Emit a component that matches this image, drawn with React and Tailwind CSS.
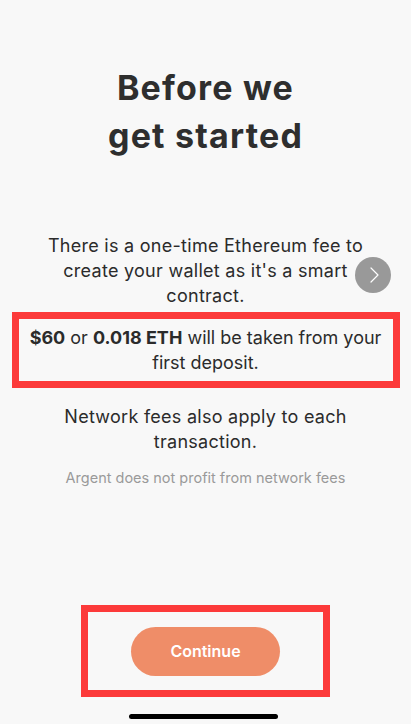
import React from 'react'

export default function App() {
  return (
    <div className="relative w-[411px] h-[724px] bg-[#f8f8f8] flex flex-col items-center text-[#2b2b2b] overflow-hidden" style={{ fontFamily: 'Inter, Roboto, sans-serif' }}>
      <h1 className="mt-[64px] text-[34px] leading-[48px] font-bold text-center text-[#2e2e2e] tracking-[0.035em]">
        Before we<br />get started
      </h1>

      <p className="mt-[73px] text-[18px] leading-[25px] text-center tracking-[0.015em]">
        There is a one-time Ethereum fee to<br />
        create your wallet as it's a smart<br />
        contract.
      </p>

      <div className="mt-[4px] w-[388px] h-[76px] border-[7px] border-[#fc3a3a] flex items-center justify-center">
        <p className="text-[18px] leading-[25px] text-center whitespace-nowrap">
          <span className="font-bold">$60</span> or <span className="font-bold">0.018 ETH</span> will be taken from your<br />
          first deposit.
        </p>
      </div>

      <p className="mt-[16px] text-[18px] leading-[25px] text-center tracking-[0.015em]">
        Network fees also apply to each<br />
        transaction.
      </p>

      <p className="mt-[14px] text-[14.5px] leading-[20px] text-center text-[#9a9a9a]">
        Argent does not profit from network fees
      </p>

      <div className="mt-auto mb-[27px] w-[249px] h-[92px] border-[7px] border-[#fc3a3a] flex items-center justify-center">
        <button className="w-[149px] h-[49px] rounded-full bg-[#ef8d68] text-white text-[16px] font-semibold">
          Continue
        </button>
      </div>

      <div className="absolute left-[129px] top-[714px] w-[149px] h-[5px] rounded-full bg-black" />

      <div className="absolute left-[355px] top-[257px] w-[36px] h-[36px] rounded-full bg-[#999999] flex items-center justify-center">
        <svg width="12" height="18" viewBox="0 0 12 18" fill="none" className="ml-[2px]">
          <path d="M3 2 L10 9 L3 16" stroke="white" strokeWidth="1.2" strokeLinecap="round" strokeLinejoin="round" />
        </svg>
      </div>
    </div>
  )
}
